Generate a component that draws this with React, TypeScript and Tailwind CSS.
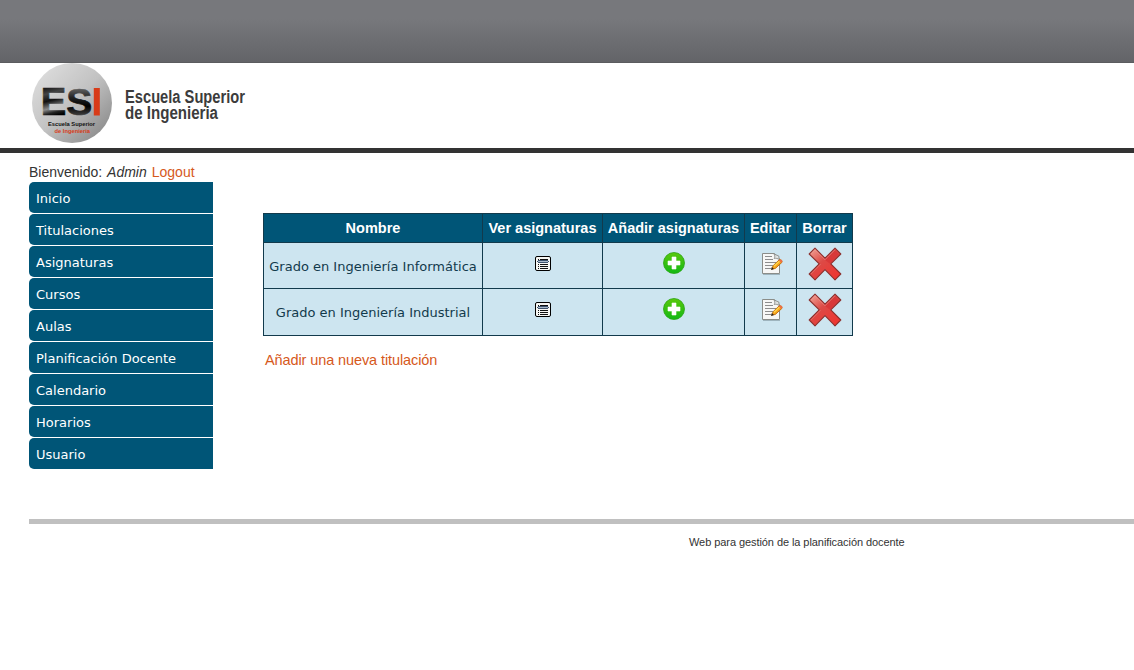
import React from "react";

const menu = [
  "Inicio",
  "Titulaciones",
  "Asignaturas",
  "Cursos",
  "Aulas",
  "Planificación Docente",
  "Calendario",
  "Horarios",
  "Usuario",
];

const degrees = ["Grado en Ingeniería Informática", "Grado en Ingeniería Industrial"];

const headings = ["Nombre", "Ver asignaturas", "Añadir asignaturas", "Editar", "Borrar"];

function Logo() {
  return (
    <svg width="220" height="80" viewBox="0 0 220 80" className="block overflow-visible" fontFamily="'Liberation Sans', sans-serif" fontWeight="bold">
      <defs>
        <linearGradient id="disc" x1="0.1" y1="0.1" x2="0.9" y2="0.9">
          <stop offset="0" stopColor="#dcdcdc" />
          <stop offset="0.5" stopColor="#c2c2c2" />
          <stop offset="1" stopColor="#8c8c8c" />
        </linearGradient>
        <linearGradient id="ink" gradientUnits="userSpaceOnUse" x1="15" y1="25" x2="22" y2="53">
          <stop offset="0" stopColor="#1c1c1c" />
          <stop offset="0.2" stopColor="#444" />
          <stop offset="0.45" stopColor="#111" />
          <stop offset="0.72" stopColor="#8a8a8a" />
          <stop offset="0.88" stopColor="#222" />
          <stop offset="1" stopColor="#000" />
        </linearGradient>
        <linearGradient id="ink2" gradientUnits="userSpaceOnUse" x1="0" y1="25" x2="0" y2="53">
          <stop offset="0" stopColor="#666" />
          <stop offset="0.35" stopColor="#222" />
          <stop offset="0.65" stopColor="#000" />
          <stop offset="1" stopColor="#444" />
        </linearGradient>
      </defs>
      <circle cx="40" cy="40" r="40" fill="url(#disc)" />
      <text x="8.7" y="52.200" fontSize="38" textLength="25.500" lengthAdjust="spacingAndGlyphs" fill="url(#ink)" stroke="url(#ink)" strokeWidth="0.700">E</text>
      <text x="34.300" y="52" fontSize="37" textLength="26" lengthAdjust="spacingAndGlyphs" fill="url(#ink2)" stroke="url(#ink2)" strokeWidth="0.700">S</text>
      <rect x="61.800" y="25" width="6" height="27.500" fill="#d83b18" />
      <text x="16" y="63" fontSize="5.800" textLength="47" lengthAdjust="spacingAndGlyphs" fill="#111">Escuela Superior</text>
      <text x="22.500" y="70.200" fontSize="5.800" textLength="35.500" lengthAdjust="spacingAndGlyphs" fill="#d83b18">de Ingenieria</text>
      <text x="93" y="40" fontSize="17.500" textLength="120" lengthAdjust="spacingAndGlyphs" fill="#3c3c3c">Escuela Superior</text>
      <text x="93" y="56" fontSize="17.500" textLength="93" lengthAdjust="spacingAndGlyphs" fill="#3c3c3c">de Ingenieria</text>
    </svg>
  );
}

function ListIcon() {
  return (
    <svg width="16" height="15" viewBox="0 0 16 15">
      <rect x="0.5" y="0.5" width="15" height="14" rx="1.5" fill="#f7f7f4" stroke="#000" />
      <path d="M3 3h1v1H3zM5 3h8v1H5zM3 8h1v1H3zM5 8h8v1H5zM3 10h1v1H3zM5 10h8v1H5zM3 12h1v1H3zM5 12h8v1H5z" fill="#111" />
      <path d="M3 4h10v3H3zM2 5h12v1H2z" fill="#3d526c" />
      <path d="M3 5h10v1H3z" fill="#a9b9cb" />
    </svg>
  );
}

function AddIcon() {
  return (
    <svg width="22" height="22" viewBox="0 0 22 22">
      <defs>
        <linearGradient id="green" x1="0" y1="0" x2="0" y2="1">
          <stop offset="0" stopColor="#5bc80c" />
          <stop offset="1" stopColor="#12b916" />
        </linearGradient>
      </defs>
      <circle cx="11" cy="11" r="10.5" fill="url(#green)" stroke="#2aa512" strokeWidth="0.8" />
      <path d="M9 5h4v4h4v4h-4v4H9v-4H5V9h4z" fill="#fff" stroke="#fff" strokeWidth="0.6" strokeLinejoin="round" />
    </svg>
  );
}

function EditIcon() {
  return (
    <svg width="22" height="24" viewBox="0 0 22 24">
      <path d="M2 22.5h17" stroke="#8ba0aa" opacity="0.7" />
      <path d="M1.5 1.5h12l5 5v15h-17z" fill="#f7f7f6" stroke="#8b8d89" strokeLinejoin="round" />
      <path d="M13 2c1 1.5 1 3 .2 4.5 1.800-.5 3.500 0 5 1L17.800 4z" fill="#dfe3e3" stroke="#8b8d89" strokeWidth="0.9" />
      <path d="M4 4.500h7M4 7.500h8M4 10.500h11M4 13.500h8M4 16.500h6" stroke="#8d8d8d" />
      <path d="M10.800 17.200l1.200-3.400 6-5.800c2-1 3.600.6 2.900 2.400l-6.500 6z" fill="#f7a51c" stroke="#bc680c" strokeWidth="0.9" />
      <path d="M13 14.200l5.600-5.200" stroke="#ffd94d" strokeWidth="1.200" />
      <path d="M17.800 8.400l2.600 2.600.8-1.200c.4-1.500-1-2.800-2.400-2.200z" fill="#ed7045" />
      <path d="M10 18l.8-3 2.200 2z" fill="#29251f" />
    </svg>
  );
}

function DeleteIcon() {
  return (
    <svg width="34" height="34" viewBox="0 0 34 34">
      <defs>
        <linearGradient id="red" x1="0" y1="0" x2="0.8" y2="1">
          <stop offset="0" stopColor="#f3a99c" />
          <stop offset="0.45" stopColor="#dc4a46" />
          <stop offset="1" stopColor="#ef342f" />
        </linearGradient>
      </defs>
      <path d="M7 1.200L17 11.200 27 1.200 32.800 7 22.800 16.800 32.800 27 27 32.800 17 22.600 7 32.800 1.200 27 11.200 16.800 1.200 7z" fill="url(#red)" stroke="#8b302e" strokeWidth="1.100" strokeLinejoin="round" />
      <path d="M22 16.800L31 7.200 27 3 17 13z" fill="#d63435" opacity="0.75" />
      <path d="M2.800 7L7 2.800 17 12.800 27 2.800M2.800 27L12.600 17" fill="none" stroke="#f5aaa0" strokeWidth="0.8" opacity="0.5" />
    </svg>
  );
}

export default function App() {
  const cell = "flex justify-center border-l border-t border-[#123a4c] whitespace-nowrap";
  const name = `${cell} pt-[15px] font-['DejaVu_Sans',Verdana,sans-serif] text-[13px] leading-[18px] text-[#123a4c]`;
  return (
    <div className="min-h-[670px] overflow-hidden bg-white font-['Liberation_Sans',Arial,sans-serif] text-[#333]">
      <div className="h-[63px] border-b border-[#5b5c5f] bg-linear-to-b from-[#77787c] from-30% to-[#636468]" />
      <header className="h-[90px] border-b-5 border-[#333] pl-8">
        <Logo />
      </header>
      <div className="flex h-[366px] pl-[29px]">
        <aside className="w-[184px] shrink-0 pt-[10px]">
          <p className="h-[19px] text-[14px] leading-[19px] whitespace-nowrap">
            Bienvenido: <em className="ml-px">Admin</em>
            <a className="ml-[5px] text-[#d6591c]">Logout</a>
          </p>
          <nav className="flex flex-col gap-px font-['DejaVu_Sans',Verdana,sans-serif] text-[13px] text-white">
            {menu.map((label) => (
              <a key={label} className="flex h-[31px] items-center rounded-l-[5px] bg-[#005577] pt-[3px] pl-[7px]">
                {label}
              </a>
            ))}
          </nav>
        </aside>
        <main className="ml-[50px] pt-[60px]">
          <div className="grid w-[590px] grid-cols-[219px_120px_142px_52px_56px] grid-rows-[29px_46px_47px] border-r border-b border-[#123a4c] bg-[#cde5f0]">
            {headings.map((h) => (
              <div key={h} className={`${cell} bg-[#005577] text-[14.5px] leading-[29px] font-bold text-white`}>
                {h}
              </div>
            ))}
            {degrees.map((d) => (
              <React.Fragment key={d}>
                <div className={name}>{d}</div>
                <div className={`${cell} pt-[13px]`}><ListIcon /></div>
                <div className={`${cell} pt-[9px]`}><AddIcon /></div>
                <div className={`${cell} pt-[9px] pl-[2px]`}><EditIcon /></div>
                <div className={`${cell} pt-1`}><DeleteIcon /></div>
              </React.Fragment>
            ))}
          </div>
          <a className="mt-[15px] ml-[2px] block text-[14.5px] leading-[18px] tracking-[-0.1px] text-[#d6591c]">Añadir una nueva titulación</a>
        </main>
      </div>
      <footer className="ml-[29px] border-t-5 border-[#c0c0c0] pt-[11px] pl-[660px] text-[11px] leading-[15px] tracking-[-0.07px]">
        Web para gestión de la planificación docente
      </footer>
    </div>
  );
}
